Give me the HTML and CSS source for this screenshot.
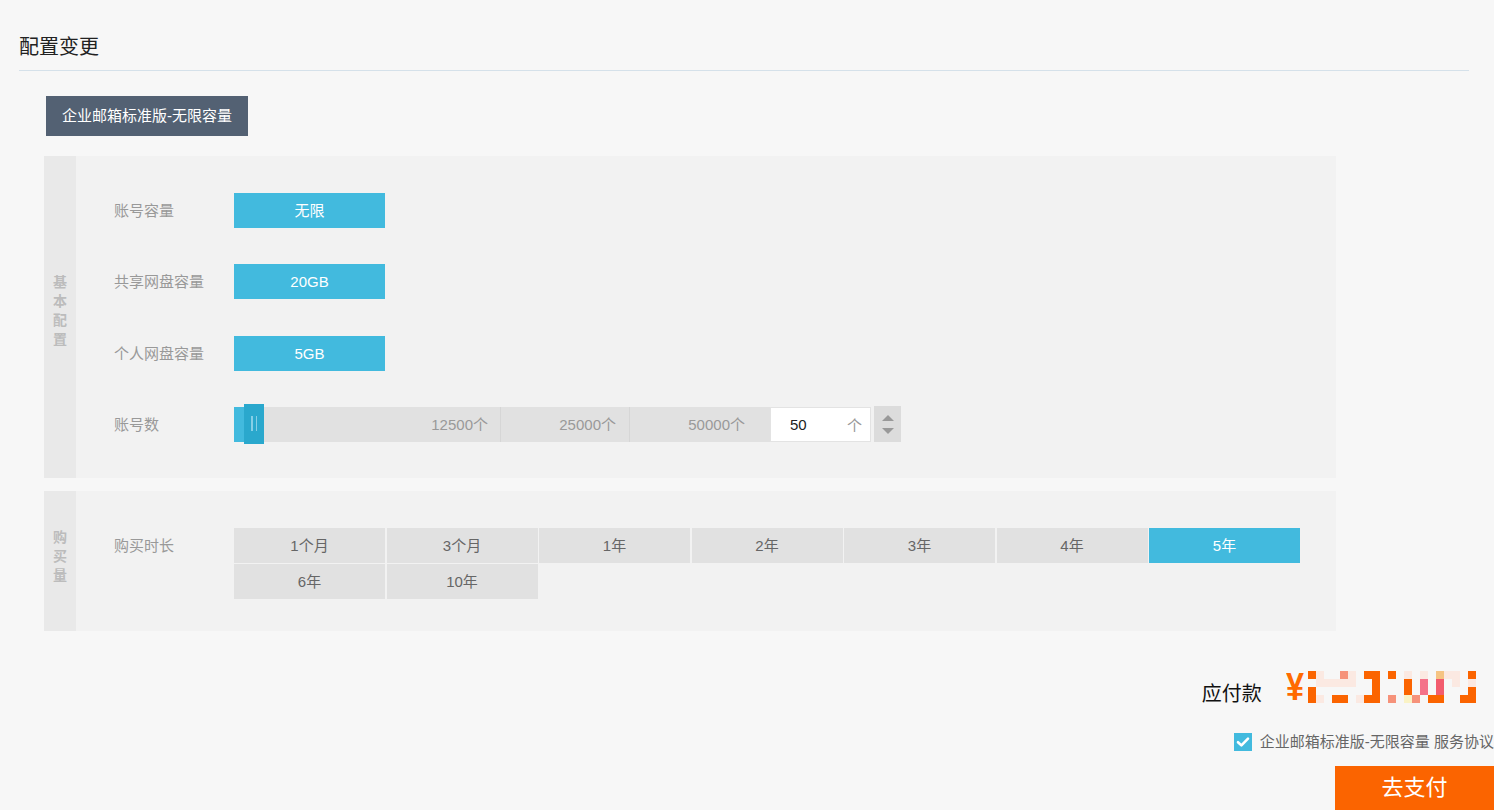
FILE: index.html
```html
<!DOCTYPE html>
<html lang="zh-CN">
<head>
<meta charset="utf-8">
<title>配置变更</title>
<link rel="stylesheet" href="styles.css">
</head>
<body>
<div class="page">
  <div class="header"><h1 class="title">配置变更</h1></div>
  <div class="content">
    <div class="tag">企业邮箱标准版-无限容量</div>

    <div class="section basic">
      <div class="side"><span>基</span><span>本</span><span>配</span><span>置</span></div>
      <div class="rows">
        <div class="row">
          <div class="label">账号容量</div>
          <div class="opt sel single">无限</div>
        </div>
        <div class="row">
          <div class="label">共享网盘容量</div>
          <div class="opt sel single">20GB</div>
        </div>
        <div class="row">
          <div class="label">个人网盘容量</div>
          <div class="opt sel single">5GB</div>
        </div>
        <div class="row">
          <div class="label">账号数</div>
          <div class="slider">
            <div class="track">
              <div class="fill"></div>
              <div class="handle"><i></i><i></i></div>
              <div class="seg s1">12500个</div>
              <div class="seg s2">25000个</div>
              <div class="seg s3">50000个</div>
            </div>
            <div class="num"><span class="val">50</span><span class="unit">个</span></div>
            <div class="spin"><i class="up"></i><i class="down"></i></div>
          </div>
        </div>
      </div>
    </div>

    <div class="section buy">
      <div class="side"><span>购</span><span>买</span><span>量</span></div>
      <div class="rows">
        <div class="row top">
          <div class="label">购买时长</div>
          <div class="grid">
            <div class="opt">1个月</div>
            <div class="opt">3个月</div>
            <div class="opt">1年</div>
            <div class="opt">2年</div>
            <div class="opt">3年</div>
            <div class="opt">4年</div>
            <div class="opt sel">5年</div>
            <div class="opt">6年</div>
            <div class="opt">10年</div>
          </div>
        </div>
      </div>
    </div>
  </div>
</div>

<div class="pay">
  <div class="price-row">
    <span class="due">应付款</span>
    <span class="price">
      <span class="yen">¥</span>
      <span class="mosaic" aria-hidden="true">
        <i class="o"></i><i class="f"></i><i></i><i></i><i class="s"></i><i class="f"></i><i></i><i class="o"></i><i class="o"></i><i></i><i class="o"></i><i></i><i class="f"></i><i></i><i class="f"></i><i></i><i class="y"></i><i class="f"></i><i class="f"></i><i></i><i class="o"></i>
        <i></i><i class="f"></i><i class="f"></i><i class="f"></i><i class="f"></i><i class="f"></i><i></i><i></i><i class="o"></i><i></i><i></i><i></i><i class="o"></i><i></i><i class="p"></i><i></i><i class="r"></i><i></i><i class="f"></i><i></i><i class="f"></i>
        <i class="o"></i><i></i><i></i><i></i><i></i><i></i><i></i><i></i><i class="o"></i><i></i><i></i><i></i><i class="o"></i><i></i><i class="p"></i><i></i><i class="r"></i><i></i><i></i><i></i><i class="o"></i>
        <i class="o"></i><i class="f"></i><i></i><i class="o"></i><i class="o"></i><i></i><i class="f"></i><i class="o"></i><i class="o"></i><i></i><i class="s"></i><i></i><i class="v"></i><i class="s"></i><i></i><i class="o"></i><i class="o"></i><i></i><i></i><i class="o"></i><i class="o"></i>
      </span>
    </span>
  </div>
  <label class="agree">
    <span class="check"><svg viewBox="0 0 18 18" width="18" height="18"><path d="M4 9.2 L7.4 12.4 L14 5.6" fill="none" stroke="#fff" stroke-width="2.6" stroke-linecap="round" stroke-linejoin="round"/></svg></span>
    <span class="agree-text">企业邮箱标准版-无限容量 服务协议</span>
  </label>
  <div class="paybtn">去支付</div>
</div>
</body>
</html>
```

FILE: styles.css
```css
* { box-sizing: border-box; }
html, body { margin: 0; padding: 0; }
body {
  background: #f7f7f7;
  font-family: "Liberation Sans", "Noto Sans CJK SC", sans-serif;
  font-size: 15px;
  color: #333;
  width: 1494px;
  height: 810px;
  overflow: hidden;
}
.page { padding: 0 25px 0 19px; }
.header {
  padding-top: 35px;
  height: 71px;
  border-bottom: 1px solid #d5e1ea;
}
.title {
  margin: 0;
  font-size: 20px;
  font-weight: normal;
  line-height: 24px;
  color: #222;
}
.content { padding-left: 25px; }
.tag {
  display: inline-block;
  margin: 25px 0 0 2px;
  height: 40px;
  line-height: 40px;
  padding: 0 16px;
  background: #536173;
  color: #fff;
  font-size: 15px;
}
.section {
  display: flex;
  width: 1292px;
  background: #f2f2f2;
}
.basic { margin-top: 20px; height: 322px; }
.buy { margin-top: 13px; height: 140px; }
.side {
  width: 32px;
  background: #e9e9e9;
  display: flex;
  flex-direction: column;
  align-items: center;
  justify-content: center;
  color: #bcbcbc;
  font-size: 14px;
  line-height: 19px;
  font-weight: bold;
}
.basic .side { padding-bottom: 12px; }
.buy .side { padding-bottom: 10px; }
.rows {
  flex: 1;
  padding: 37px 0 0 38px;
  display: flex;
  flex-direction: column;
  gap: 36px;
}
.basic .rows { gap: 36.3px; }
.row {
  display: flex;
  align-items: center;
  height: 35px;
}
.row.top { align-items: flex-start; height: auto; }
.label {
  width: 120px;
  color: #999;
  font-size: 15px;
  line-height: 35px;
}
.opt {
  height: 35px;
  line-height: 35px;
  text-align: center;
  background: #e1e1e1;
  color: #666;
  font-size: 15px;
}
.opt.single { width: 151px; }
.opt.sel { background: #42bade; color: #fff; }
.grid {
  width: 1066px;
  display: grid;
  grid-template-columns: repeat(7, 1fr);
  column-gap: 1.5px;
  row-gap: 1px;
}

/* slider */
.slider { display: flex; align-items: center; }
.track {
  position: relative;
  display: flex;
  width: 536px;
  height: 35px;
  background: #e1e1e1;
}
.fill {
  position: absolute;
  left: 0; top: 0;
  width: 12px;
  height: 35px;
  background: #42bade;
}
.handle {
  position: absolute;
  left: 10px; top: -3px;
  width: 20px;
  height: 40px;
  background: #2aa8cd;
  display: flex;
  justify-content: center;
  align-items: center;
  gap: 3px;
}
.handle i {
  display: block;
  width: 1.5px;
  height: 15px;
  background: #86cfe6;
}
.seg {
  text-align: right;
  color: #999;
  font-size: 15px;
  line-height: 35px;
}
.s1 { width: 267px; padding-right: 12px; border-right: 1px solid #d6d6d6; }
.s2 { width: 129px; padding-right: 13px; border-right: 1px solid #d6d6d6; }
.s3 { width: 140px; padding-right: 25px; }
.num {
  width: 101px;
  height: 35px;
  background: #fff;
  border: 1px solid #e3e3e3;
  display: flex;
  justify-content: space-between;
  align-items: center;
  padding: 0 8px 0 19px;
  font-size: 15px;
}
.num .val { color: #222; }
.num .unit { color: #999; }
.spin {
  margin-left: 3px;
  width: 27px;
  height: 36px;
  background: #dcdcdc;
  display: flex;
  flex-direction: column;
  align-items: center;
  justify-content: center;
  gap: 7px;
}
.spin i { display: block; width: 0; height: 0; border-left: 6px solid transparent; border-right: 6px solid transparent; }
.spin .up { border-bottom: 6px solid #999; }
.spin .down { border-top: 6px solid #999; }

/* payment */
.pay {
  display: flex;
  flex-direction: column;
  align-items: flex-end;
  margin-top: 42px;
}
.price-row {
  display: flex;
  align-items: center;
  height: 40px;
  margin-right: 18px;
}
.due { font-size: 20px; color: #111; line-height: 40px; margin-top: 2px; }
.price { display: flex; align-items: center; margin-left: 24px; margin-bottom: 12px; }
.yen { color: #ff6a00; font-size: 38px; line-height: 34px; font-weight: bold; transform: scaleX(0.85); transform-origin: left center; margin-right: -3px; }
.mosaic {
  margin-left: 4px;
  display: grid;
  grid-template-columns: repeat(21, 8px);
  grid-auto-rows: 8px;
}
.mosaic i { display: block; }
.mosaic .o { background: #fb6400; }
.mosaic .s { background: #f6927a; }
.mosaic .p { background: #f4728a; }
.mosaic .r { background: #f25c6e; }
.mosaic .y { background: #f6c483; }
.mosaic .v { background: #faf3c6; }
.mosaic .f { background: #fbe9e2; }
.agree {
  display: flex;
  align-items: center;
  margin-top: 19px;
  margin-right: 0;
  height: 20px;
}
.check {
  width: 18px; height: 18px;
  background: #42bade;
  margin-right: 8px;
  display: block;
}
.check svg { display: block; }
.agree-text { color: #666; font-size: 15px; line-height: 20px; white-space: nowrap; }
.paybtn {
  margin-top: 14px;
  width: 159px;
  height: 44px;
  line-height: 44px;
  background: #fb6400;
  color: #fff;
  text-align: center;
  font-size: 22px;
}
```
